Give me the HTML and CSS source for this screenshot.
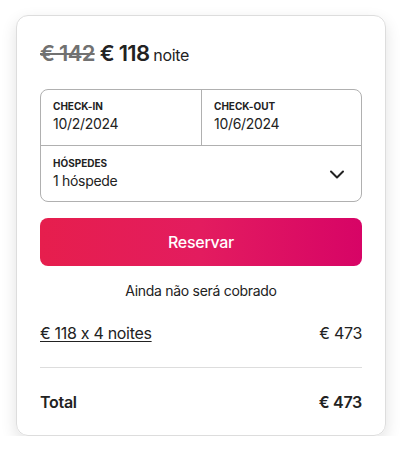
FILE: index.html
```html
<!DOCTYPE html>
<html lang="pt">
<head>
<meta charset="utf-8">
<link rel="stylesheet" href="styles.css">
</head>
<body>
<div class="card">
  <div class="price">
    <span class="old">€ 142</span>
    <span class="now">€ 118</span>
    <span class="unit">noite</span>
  </div>
  <div class="picker">
    <div class="dates">
      <div class="field">
        <div class="label">CHECK-IN</div>
        <div class="value">10/2/2024</div>
      </div>
      <div class="field field-right">
        <div class="label">CHECK-OUT</div>
        <div class="value">10/6/2024</div>
      </div>
    </div>
    <div class="field guests">
      <div>
        <div class="label">HÓSPEDES</div>
        <div class="value">1 hóspede</div>
      </div>
      <svg class="chev" viewBox="0 0 16 16" width="16" height="16"><path d="M2 5.5 L8 11.5 L14 5.5" fill="none" stroke="#222" stroke-width="2" stroke-linecap="round" stroke-linejoin="round"/></svg>
    </div>
  </div>
  <button class="reserve">Reservar</button>
  <p class="note">Ainda não será cobrado</p>
  <div class="row">
    <span class="link">€ 118 x 4 noites</span>
    <span>€ 473</span>
  </div>
  <div class="row total">
    <span>Total</span>
    <span>€ 473</span>
  </div>
</div>
</body>
</html>
```
FILE: styles.css
```css
* { box-sizing: border-box; }
html, body { margin: 0; padding: 0; background: #fff; }
body {
  font-family: Inter, "Noto Sans", sans-serif;
  font-feature-settings: "calt" 0;
  letter-spacing: -0.3px;
  color: #222;
  padding: 15px 16px 0 16px;
}
.card {
  width: 370px;
  height: 421px;
  border: 1px solid #dddddd;
  border-radius: 12px;
  box-shadow: 0 6px 16px rgba(0,0,0,0.12);
  padding: 23px 23px 24px 23px;
}
.price {
  display: flex;
  align-items: baseline;
  gap: 5px;
  height: 28px;
  line-height: 28px;
}
.old {
  font-size: 22px;
  font-weight: 600;
  color: #717171;
  text-decoration: line-through;
  letter-spacing: -0.7px;
}
.now {
  font-size: 22px;
  font-weight: 600;
  letter-spacing: -0.7px;
}
.unit { font-size: 16px; font-weight: 400; margin-left: -1px; }
.picker {
  margin-top: 22px;
  border: 1px solid #b0b0b0;
  border-radius: 8px;
}
.dates {
  display: grid;
  grid-template-columns: 1fr 1fr;
  border-bottom: 1px solid #b0b0b0;
}
.field {
  height: 55px;
  padding: 10px 12px;
}
.field-right { border-left: 1px solid #b0b0b0; }
.label {
  font-size: 10px;
  font-weight: 700;
  line-height: 12px;
  letter-spacing: 0;
}
.value {
  font-size: 14px;
  line-height: 20px;
  margin-top: 2px;
}
.guests {
  display: flex;
  align-items: center;
  justify-content: space-between;
  padding-right: 16px;
}
.chev { display: block; }
.reserve {
  display: block;
  width: 100%;
  height: 48px;
  margin-top: 16px;
  border: 0;
  border-radius: 8px;
  background: linear-gradient(to right, #e61e4d 0%, #e31c5f 50%, #d70466 100%);
  color: #fff;
  font-family: inherit;
  font-feature-settings: inherit;
  letter-spacing: inherit;
  font-size: 16px;
  font-weight: 500;
}
.note {
  margin: 16px 0 0 0;
  text-align: center;
  font-size: 14px;
  line-height: 18px;
}
.row {
  display: flex;
  justify-content: space-between;
  font-size: 16px;
  line-height: 20px;
  margin-top: 23px;
  padding-bottom: 24px;
}
.link { text-decoration: underline; text-underline-offset: 2px; }
.total {
  border-top: 1px solid #dddddd;
  margin-top: 0;
  padding-top: 24px;
  font-weight: 600;
}
```
